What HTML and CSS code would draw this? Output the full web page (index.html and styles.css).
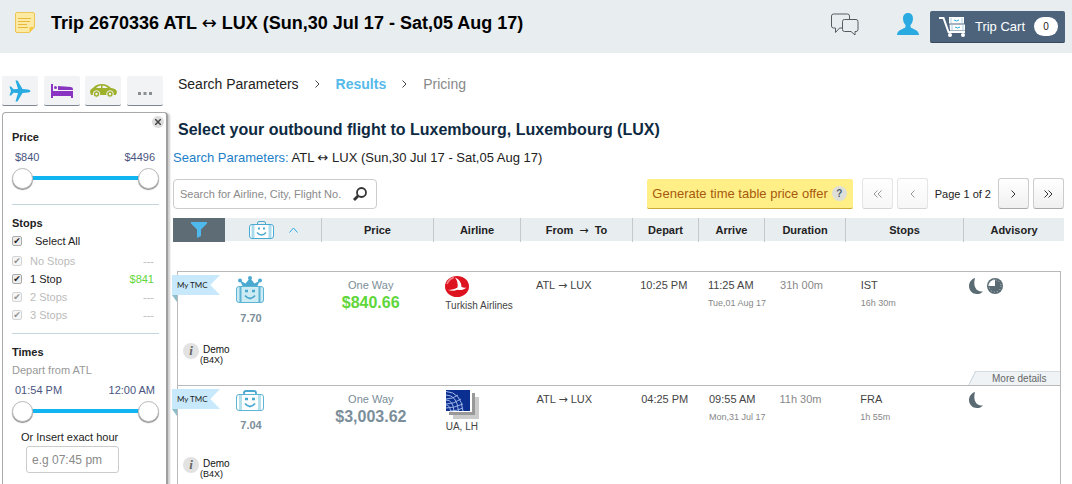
FILE: index.html
```html
<!DOCTYPE html>
<html lang="en">
<head>
    <meta charset="UTF-8">
    <meta name="viewport" content="width=device-width, initial-scale=1.0">
    <title>Trip 2670336 - Flight results</title>
    <link rel="stylesheet" href="styles.css">
</head>
<body>
    <svg class="sprite" aria-hidden="true">
        <symbol id="moon" viewBox="0 0 14 16">
            <path d="M6 0C2 1.300 0 4.500 0 8c0 4.500 3.500 8 8 8 2.400 0 4.500-.9 6-2.600C8 14.500 3.500 9 6 0z" fill="#5a6b74"/>
        </symbol>
    </svg>

    <header class="topbar">
        <svg class="note" width="20" height="21" viewBox="0 0 20 21">
            <path d="M2 .5h16q1.500 0 1.500 1.500v13l-5 5.500H2Q.5 20.500.5 19V2Q.5.500 2 .5z" fill="#fdeaa2" stroke="#edc556"/>
            <path d="M14.500 20.500V16q0-1 1-1h4z" fill="#f5c842"/>
            <path d="M3 6.500h13M3 9.500h12M3 12.500h9M3 15.500h10" stroke="#e9b93f"/>
        </svg>
        <h1>Trip 2670336 ATL <span class="arrow">↔</span> LUX (Sun,30 Jul 17 - Sat,05 Aug 17)</h1>
        <svg class="chat" width="28" height="23" viewBox="0 0 28 23" fill="none" stroke="#555c60">
            <path d="M11.500 15H8.500L4.500 19.500V15H2.500Q.5 15 .5 13V3Q.5 1 2.500 1h14Q18.500 1 18.500 3v3.500"/>
            <path d="M13.500 6.500h11.500q2 0 2 2v8q0 2-2 2h-1v3.500l-4-3.500h-6.500q-2 0-2-2v-8q0-2 2-2z"/>
        </svg>
        <svg class="user" width="22" height="22" viewBox="0 0 22 22">
            <path d="M11 0c3.500 0 5 2.500 5 5.500 0 2.500-1 5-2.500 6.500v2c1 2 8.500 2.500 8.500 8H0c0-5.500 7.500-6 8.500-8v-2C7 10.500 6 8 6 5.500 6 2.500 7.500 0 11 0z" fill="#29abe2"/>
        </svg>
        <button type="button" class="cart">
            <svg width="27" height="20" viewBox="0 0 27 20">
                <path d="M0 1h4.500l5 14H26" fill="none" stroke="#fff" stroke-width="2"/>
                <path d="M10 0h15v6.500H10zM10.500 7.500H26v6H11z" fill="#fff"/>
                <path d="M12 1v5M23 1v5M13 7.500v6M24 7.500v6" stroke="#a9cfe8"/>
                <path d="M15 3q2.500 2 5 0M16 10q2.500 2 5 0" fill="none" stroke="#29abe2"/>
                <circle cx="11" cy="18" r="2" fill="#fff"/>
                <circle cx="24" cy="18" r="2" fill="#fff"/>
            </svg>
            <span>Trip Cart</span>
            <span class="cart-count">0</span>
        </button>
    </header>

    <div class="layout">
        <aside class="sidebar">
            <nav class="tabs">
                <button type="button" aria-label="Flights">
                    <svg width="22" height="22" viewBox="0 0 22 22">
                        <path d="M6.500.5h2l5 8.500 5.500.5q2.500.5 2.500 1.500t-2.500 1.500l-5.500.5-5 8.500h-2L9 13l-4.500-.3L2 15.500H.5L2 11 .5 6.500H2l2.500 2.800L9 9z" fill="#29abe2"/>
                    </svg>
                </button>
                <button type="button" aria-label="Hotels">
                    <svg width="22" height="14" viewBox="0 0 22 14" fill="#8a35c2">
                        <path d="M0 0h2v7h20v7h-2v-2H2v2H0z"/>
                        <path d="M7 2l13 1q2 .3 2 2v1H7z"/>
                        <circle cx="4.500" cy="3.500" r="1.500"/>
                    </svg>
                </button>
                <button type="button" aria-label="Cars">
                    <svg width="27" height="14" viewBox="0 0 27 14">
                        <path d="M0 8q0-3 3-4Q6 0 12 0q5 0 9 4 5.500.5 6 4l-1 3H1z" fill="#9fb02b"/>
                        <path d="M6 4q2-2.500 5-2.500V4zM12.500 1.500q3.500 0 5.500 2.500h-5.500z" fill="#f1f3f5"/>
                        <g fill="#9fb02b" stroke="#f1f3f5">
                            <circle cx="6.500" cy="10" r="3.300"/>
                            <circle cx="20" cy="10" r="3.300"/>
                        </g>
                        <circle cx="6.500" cy="10" r="1.200" fill="#f1f3f5"/>
                        <circle cx="20" cy="10" r="1.200" fill="#f1f3f5"/>
                    </svg>
                </button>
                <button type="button" aria-label="More">
                    <svg width="14" height="8" viewBox="0 0 14 8" fill="#8a8f94">
                        <path d="M0 5h3v3H0zM5.500 5h3v3h-3zM11 5h3v3h-3z"/>
                    </svg>
                </button>
            </nav>

            <form class="filters">
                <button type="button" class="close" aria-label="Close">
                    <svg width="6" height="6" viewBox="0 0 6 6"><path d="M0 0l6 6M6 0L0 6" stroke="#444" stroke-width="1.500"/></svg>
                </button>

                <section class="price-filter">
                    <h3>Price</h3>
                    <div class="range-values"><span>$840</span><span>$4496</span></div>
                    <div class="range">
                        <input type="range" min="840" max="4496" value="840" aria-label="Minimum price">
                        <input type="range" min="840" max="4496" value="4496" aria-label="Maximum price">
                    </div>
                </section>

                <section class="stops">
                    <h3>Stops</h3>
                    <label class="all"><input type="checkbox" checked> Select All</label>
                    <label class="off"><input type="checkbox" checked disabled> No Stops <span>---</span></label>
                    <label><input type="checkbox" checked> 1 Stop <span class="best">$841</span></label>
                    <label class="off"><input type="checkbox" checked disabled> 2 Stops <span>---</span></label>
                    <label class="off"><input type="checkbox" checked disabled> 3 Stops <span>---</span></label>
                </section>

                <section>
                    <h3>Times</h3>
                    <p class="depart-from">Depart from ATL</p>
                    <div class="range-values"><span>01:54 PM</span><span>12:00 AM</span></div>
                    <div class="range">
                        <input type="range" min="834" max="1440" value="834" aria-label="Earliest departure">
                        <input type="range" min="834" max="1440" value="1440" aria-label="Latest departure">
                    </div>
                    <div class="exact">
                        <label for="exactHour">Or Insert exact hour</label>
                        <input type="text" id="exactHour" placeholder="e.g 07:45 pm">
                    </div>
                </section>
            </form>
        </aside>

        <main>
            <nav class="steps">
                <a href="#">Search Parameters</a>
                <svg width="5" height="8" viewBox="0 0 5 8"><path d="M.5.500L4 4 .5 7.500" fill="none" stroke="#444"/></svg>
                <a href="#" class="current">Results</a>
                <svg width="5" height="8" viewBox="0 0 5 8"><path d="M.5.500L4 4 .5 7.500" fill="none" stroke="#444"/></svg>
                <span>Pricing</span>
            </nav>

            <h2>Select your outbound flight to Luxembourg, Luxembourg (LUX)</h2>
            <p class="summary"><a href="#">Search Parameters:</a> ATL <span class="arrow">↔</span> LUX (Sun,30 Jul 17 - Sat,05 Aug 17)</p>

            <div class="toolbar">
                <div class="search">
                    <input type="text" aria-label="Search flights" placeholder="Search for Airline, City, Flight No.">
                    <svg width="14" height="14" viewBox="0 0 14 14" fill="none" stroke="#333">
                        <circle cx="8.500" cy="5.500" r="4.500" stroke-width="1.800"/>
                        <path d="M5 9l-4 4" stroke-width="2.800"/>
                    </svg>
                </div>
                <button type="button" class="offer">Generate time table price offer <span class="help">?</span></button>
                <div class="pager">
                    <button type="button" disabled aria-label="First page"><svg width="9" height="8" viewBox="0 0 9 8"><path d="M4.500.500L1 4l3.500 3.500M8.500.500L5 4l3.500 3.500"/></svg></button>
                    <button type="button" disabled aria-label="Previous page"><svg width="5" height="8" viewBox="0 0 5 8"><path d="M4.500.500L1 4l3.500 3.500"/></svg></button>
                    <span>Page 1 of 2</span>
                    <button type="button" aria-label="Next page"><svg width="5" height="8" viewBox="0 0 5 8"><path d="M.5.500L4 4 .5 7.500"/></svg></button>
                    <button type="button" aria-label="Last page"><svg width="9" height="8" viewBox="0 0 9 8"><path d="M.5.500L4 4 .5 7.500M4.500.500L8 4 4.500 7.500"/></svg></button>
                </div>
            </div>

            <table class="results">
                <thead>
                    <tr>
                        <th class="filter-cell">
                            <svg width="16" height="16" viewBox="0 0 16 16"><path d="M0 0h16v1.500L10 7.500V14l-4 2V7.500L0 1.500z" fill="#4fb9ee"/></svg>
                        </th>
                        <th class="score-cell">
                            <svg width="25" height="18" viewBox="0 0 25 18" fill="none" stroke="#4aa9d0">
                                <path d="M8.500 3V2q0-1.500 1.500-1.500h5q1.500 0 1.500 1.500v1"/>
                                <rect x=".5" y="3.500" width="24" height="14" rx="2.500" fill="#fff"/>
                                <path d="M4 4v13M21 4v13" stroke="#aadcee" stroke-width="3"/>
                                <path d="M8 11.500q4.500 5 9 0" stroke-width="1.500"/>
                                <path d="M9 7.500h2M14 7.500h2" stroke-width="2"/>
                            </svg>
                            <svg width="9" height="6" viewBox="0 0 9 6"><path d="M.5 5.500l4-4.500 4 4.500" fill="none" stroke="#29abe2"/></svg>
                        </th>
                        <th>Price</th>
                        <th>Airline</th>
                        <th>From &nbsp;<span class="arrow">→</span>&nbsp; To</th>
                        <th>Depart</th>
                        <th>Arrive</th>
                        <th>Duration</th>
                        <th>Stops</th>
                        <th>Advisory</th>
                    </tr>
                </thead>
                <tbody>
                    <tr>
                        <td class="source">
                            <span class="ribbon">My TMC</span>
                            <div class="provider"><i>i</i><span>Demo<small>(B4X)</small></span></div>
                        </td>
                        <td class="score">
                            <svg width="28" height="28" viewBox="0 0 28 28">
                                <path d="M7 11L4 4.500l5.500 3L14 2l4.500 5.500 5.500-3L21 11z" fill="#4aa9d0"/>
                                <g fill="#4aa9d0">
                                    <circle cx="4" cy="4.500" r="2"/>
                                    <circle cx="14" cy="2" r="2"/>
                                    <circle cx="24" cy="4.500" r="2"/>
                                </g>
                                <rect x=".5" y="10.500" width="27" height="16" rx="2.500" fill="#cdebf3" stroke="#5db4d4"/>
                                <path d="M4.500 11v15M23.500 11v15" stroke="#5db4d4" stroke-width="2"/>
                                <path d="M9 19.500q5 6 10 0" fill="none" stroke="#4aa9d0" stroke-width="1.800"/>
                                <path d="M9 15h3M16 15h3" stroke="#4aa9d0" stroke-width="2.500"/>
                            </svg>
                            <b>7.70</b>
                        </td>
                        <td class="price">One Way<strong class="best">$840.66</strong></td>
                        <td class="airline">
                            <svg width="33" height="22" viewBox="0 0 33 22">
                                <ellipse cx="12" cy="10.500" rx="12" ry="10.500" fill="#dd1420"/>
                                <path d="M2 8Q4 3 9 1.500" fill="none" stroke="#f2848a" stroke-width="1.500"/>
                                <path d="M10 1.500c4 1.500 6.500 5 6.500 9.500 2 .8 3.500.8 5 .5-3 2.500-6 3-9 2.300-3 1.200-6 1.200-9.500.2 4-.3 7-.8 9.500-2.500Q13.500 6 10 1.500z" fill="#fff"/>
                            </svg>
                            Turkish Airlines
                        </td>
                        <td class="route">ATL <span class="arrow">→</span> LUX</td>
                        <td class="depart">10:25 PM</td>
                        <td class="arrive">11:25 AM<small>Tue,01 Aug 17</small></td>
                        <td class="duration">31h 00m</td>
                        <td class="stop">IST<small>16h 30m</small></td>
                        <td class="advisory">
                            <svg width="14" height="16"><use href="#moon"/></svg>
                            <svg width="16" height="16" viewBox="0 0 16 16">
                                <circle cx="8" cy="8" r="8" fill="#5a6b74"/>
                                <path d="M8 8V1.500A6.500 6.500 0 0 0 1.500 8z" fill="#fff"/>
                                <circle cx="8" cy="8" r="6" fill="none" stroke="#c5ced2" stroke-dasharray="1 2.140"/>
                            </svg>
                            <a href="#" class="more">More details</a>
                        </td>
                    </tr>
                    <tr>
                        <td class="source">
                            <span class="ribbon">My TMC</span>
                            <div class="provider"><i>i</i><span>Demo<small>(B4X)</small></span></div>
                        </td>
                        <td class="score">
                            <svg width="28" height="21" viewBox="0 0 28 21" fill="none" stroke="#5db4d4">
                                <path d="M8 4V3q0-2 2-2h8q2 0 2 2v1" stroke="#4aa9d0" stroke-width="1.800"/>
                                <rect x=".5" y="4.500" width="27" height="16" rx="2.500" fill="#fff"/>
                                <path d="M4.500 5v15M23.500 5v15" stroke="#b5e0ec" stroke-width="3"/>
                                <path d="M9 13.500q5 6 10 0" stroke="#4aa9d0" stroke-width="1.800"/>
                                <path d="M9 9h3M16 9h3" stroke="#4aa9d0" stroke-width="2.500"/>
                            </svg>
                            <b>7.04</b>
                        </td>
                        <td class="price">One Way<strong>$3,003.62</strong></td>
                        <td class="airline">
                            <svg width="33" height="29" viewBox="0 0 33 29">
                                <path d="M7 7h26v22H7z" fill="#cbcbcb"/>
                                <path d="M3 3h26v22H3z" fill="#999"/>
                                <path d="M0 0h26v22H0z" fill="#fff"/>
                                <path d="M0 0h24v21H0z" fill="#0b2f91"/>
                                <g fill="none" stroke="#9db4e6">
                                    <path d="M0 1.500Q15 2 17 21M0 5q11 0 12.500 16M0 10q7 0 8 11M0 15q4 0 4.500 6"/>
                                    <path d="M0 18q8 0 17-4M0 14q8 0 15-5M0 9q7 0 12-4M4 21q7 0 13-3"/>
                                </g>
                            </svg>
                            UA, LH
                        </td>
                        <td class="route">ATL <span class="arrow">→</span> LUX</td>
                        <td class="depart">04:25 PM</td>
                        <td class="arrive">09:55 AM<small>Mon,31 Jul 17</small></td>
                        <td class="duration">11h 30m</td>
                        <td class="stop">FRA<small>1h 55m</small></td>
                        <td class="advisory">
                            <svg width="14" height="16"><use href="#moon"/></svg>
                            <a href="#" class="more">More details</a>
                        </td>
                    </tr>
                </tbody>
            </table>
        </main>
    </div>
</body>
</html>
```
FILE: styles.css
```css
* {
    box-sizing: border-box;
}
body {
    margin: 0;
    font-family: "Liberation Sans", Arial, sans-serif;
    font-size: 11px;
    line-height: 16px;
    color: #222;
    background: #fff;
}
h1, h2, h3, p {
    margin: 0;
}
a {
    color: inherit;
    text-decoration: none;
}
button {
    padding: 0;
    border: 0;
    font-family: inherit;
    cursor: pointer;
}
input {
    margin: 0;
    font-family: inherit;
}
svg {
    display: block;
    flex: none;
}
.sprite {
    position: absolute;
    width: 0;
    height: 0;
}
.arrow {
    font-family: "DejaVu Sans", sans-serif;
    font-weight: normal;
    line-height: 1;
}

/* top bar */
.topbar {
    display: flex;
    align-items: center;
    height: 53px;
    padding: 0 7px 8px 15px;
    background: #e8edf0;
}
.topbar h1 {
    margin-left: 16px;
    font-size: 18px;
    line-height: 24px;
    color: #000;
}
.chat {
    margin: 3px 0 0 auto;
}
.user {
    margin: 2px 11px 0 38px;
}
.cart {
    display: flex;
    align-items: center;
    gap: 9px;
    height: 32px;
    margin-top: 9px;
    padding: 0 7px 0 9px;
    border-bottom: 1px solid #38485c;
    border-radius: 2px;
    background: #4d637c;
    color: #fff;
    font-size: 13px;
}
.cart-count {
    width: 24px;
    border-radius: 10px;
    background: #fff;
    color: #222;
    font-size: 10px;
    line-height: 19px;
}

.layout {
    display: flex;
    gap: 5px;
    padding: 0 8px 0 2px;
}

/* sidebar */
.sidebar {
    flex: none;
    display: flex;
    flex-direction: column;
    width: 166px;
    padding-top: 23px;
}
.tabs {
    display: flex;
    justify-content: space-between;
    padding-right: 5px;
    margin-bottom: 6px;
}
.tabs button {
    display: flex;
    align-items: center;
    justify-content: center;
    width: 36px;
    height: 30px;
    border-bottom: 1px solid #7d868f;
    border-radius: 2px;
    background: #f1f3f5;
}
.filters {
    position: relative;
    flex: 1;
    padding: 15px 7px 0 9px;
    border: 1px solid #a9a9a9;
    border-right: 2px solid #a0a0a0;
    border-radius: 4px;
    box-shadow: 2px 1px 2px #ccc;
}
.close {
    position: absolute;
    top: 3px;
    right: 2px;
    display: flex;
    align-items: center;
    justify-content: center;
    width: 12px;
    height: 12px;
    border-radius: 50%;
    background: #ddd;
}
.filters section + section {
    margin-top: 9px;
    padding-top: 9px;
    border-top: 1px solid #c5d5dc;
}
.filters .price-filter {
    margin-bottom: 15px;
}
.filters h3 {
    font-size: 11px;
    line-height: 18px;
}
.range-values {
    display: flex;
    justify-content: space-between;
    padding: 2px 4px 0 3px;
    line-height: 18px;
    color: #4a5580;
}
.range {
    display: grid;
    align-items: center;
    height: 22px;
    margin: 1px 0 6px;
    background: linear-gradient(#10b4f0, #10b4f0) center / 126px 4px no-repeat;
}
.range input {
    grid-area: 1 / 1;
    width: 100%;
    height: 22px;
    appearance: none;
    background: none;
    pointer-events: none;
}
.range input::-webkit-slider-thumb {
    appearance: none;
    width: 21px;
    height: 21px;
    border: 1px solid #bbb;
    border-radius: 50%;
    background: #fff;
    box-shadow: 0 1px 1px #888;
    pointer-events: auto;
}
.stops label {
    display: flex;
    align-items: center;
    gap: 8px;
    padding-right: 5px;
    line-height: 18px;
}
.stops .all {
    gap: 13px;
    margin-bottom: 2px;
}
.stops .off {
    color: #bbb;
}
.stops label span {
    margin-left: auto;
}
.best {
    color: #5fd63a;
}
.stops input {
    display: flex;
    align-items: center;
    justify-content: center;
    width: 10px;
    height: 10px;
    appearance: none;
    border: 1px solid #aaa;
    border-radius: 2px;
    background: #eee;
    color: #222;
}
.stops input:checked::after {
    content: "✔";
    font-family: "DejaVu Sans", sans-serif;
    font-size: 9px;
    line-height: 8px;
}
.stops input:disabled {
    opacity: 0.5;
}
.depart-from {
    line-height: 18px;
    color: #999;
}
.exact {
    display: flex;
    flex-direction: column;
    align-items: flex-start;
    padding: 0 0 32px 9px;
}
.exact label {
    line-height: 18px;
}
.exact input {
    width: 93px;
    height: 27px;
    margin-left: 5px;
    padding: 0 5px;
    border: 1px solid #ccc;
    border-radius: 3px;
    font-size: 12px;
}
::placeholder {
    color: #8a8a8a;
}

/* main column */
main {
    flex: 1;
    min-width: 0;
    padding-top: 21px;
}
.steps {
    display: flex;
    align-items: center;
    gap: 16px;
    padding-left: 5px;
    font-size: 14px;
    line-height: 20px;
    color: #888;
}
.steps a {
    color: #222;
}
.steps .current {
    color: #55b9e9;
    font-weight: bold;
}
main h2 {
    margin-top: 25px;
    padding-left: 5px;
    font-size: 16px;
    line-height: 22px;
    color: #0e2a42;
}
.summary {
    margin-top: 8px;
    font-size: 13px;
    line-height: 18px;
}
.summary a {
    color: #1c80c9;
}
.toolbar {
    display: flex;
    align-items: flex-end;
    gap: 9px;
    margin: 11px 0 9px;
}
.search {
    display: flex;
    align-items: center;
    width: 204px;
    height: 30px;
    margin-right: auto;
    padding: 0 9px 0 6px;
    border: 1px solid #ccc;
    border-radius: 4px;
}
.search input {
    flex: 1;
    min-width: 0;
    padding: 0;
    border: 0;
    outline: 0;
    font-size: 11px;
}
.offer {
    display: flex;
    align-items: center;
    gap: 4px;
    height: 30px;
    padding: 0 6px 0 5px;
    border-bottom: 1px solid #c9ab35;
    border-radius: 2px;
    background: #ffef86;
    color: #a8590f;
    font-size: 13px;
}
.help {
    width: 15px;
    border-radius: 50%;
    background: #dedfd9;
    color: #4d5f70;
    font-size: 10px;
    font-weight: bold;
    line-height: 15px;
}
.pager {
    display: flex;
    align-items: center;
    gap: 4px;
}
.pager span {
    padding: 0 3px;
}
.pager button {
    display: flex;
    align-items: center;
    justify-content: center;
    width: 31px;
    height: 31px;
    border: 1px solid #ccc;
    border-bottom-color: #aaa;
    border-radius: 3px;
    background: linear-gradient(#fff, #f0f0f0);
}
.pager button:disabled {
    opacity: 0.5;
}
.pager path {
    fill: none;
    stroke: #333;
}

/* results: the body box is inset 4px left and 3px right of the heading bar */
.results,
.results thead,
.results tbody {
    display: block;
}
.results tr {
    --middle: 97px 112fr 87fr 112fr 66fr 66fr 81fr 118fr;
    display: grid;
}
.results thead tr {
    grid-template-columns: 52px var(--middle) 100px;
    height: 23px;
    background: #e8edf0;
}
.results th {
    padding: 0;
    border-right: 1px solid #c6c9cb;
    line-height: 24px;
}
.results th:last-child {
    border-right: 0;
}
.results .filter-cell,
.results .score-cell {
    display: flex;
    align-items: center;
    justify-content: center;
    gap: 15px;
}
.results .filter-cell {
    border-right: 0;
    background: #5e6d75;
}
.results tbody {
    margin: 30px 3px 0 4px;
    border: 1px solid #b9b9b9;
}
.results tbody tr {
    grid-template-columns: 47px var(--middle) 96px;
    height: 114px;
    border-bottom: 1px solid #b9b9b9;
}
.results tbody tr:last-child {
    border-bottom: 0;
}
.results td {
    position: relative;
    padding: 5px 0 0;
    color: #444;
    white-space: nowrap;
}
.results td small {
    display: block;
    font-size: 9px;
    line-height: 20px;
    color: #888;
}
.ribbon {
    position: absolute;
    top: 3px;
    left: -6px;
    width: 48px;
    padding-left: 5px;
    background: #c8e9fb;
    clip-path: polygon(0 0, 100% 0, 80% 50%, 100% 100%, 0 100%);
    font-family: Lato, sans-serif;
    font-size: 8px;
    line-height: 20px;
    color: #222;
}
.source::before {
    content: "";
    position: absolute;
    top: 23px;
    left: -6px;
    width: 5px;
    height: 7px;
    background: #8dbccb;
    clip-path: polygon(0 0, 100% 0, 100% 100%);
}
.provider {
    display: flex;
    align-items: flex-start;
    gap: 2px;
    margin: 66px 0 0 5px;
    font-size: 10px;
    line-height: 10px;
    color: #111;
}
.provider i {
    flex: none;
    width: 16px;
    border-radius: 50%;
    background: #e2e2e2;
    color: #666;
    font-family: "Liberation Serif", serif;
    font-size: 13px;
    font-weight: bold;
    line-height: 16px;
    text-align: center;
}
.provider span {
    padding: 2px 0 0 2px;
}
.results td.source small {
    margin-left: -3px;
    line-height: 10px;
    color: #111;
}
.results .score {
    padding: 4px 0 0 11px;
}
.score b {
    display: block;
    width: 30px;
    margin-top: 6px;
    text-align: center;
    color: #7b8e99;
}
.results .price {
    padding-right: 14px;
    text-align: center;
    color: #7b8e99;
}
.price strong {
    display: block;
    font-size: 16px;
    line-height: 20px;
}
.price .best {
    color: #5fd63a;
}
.results .airline {
    padding: 4px 0 0 12px;
    font-size: 10px;
}
.results .route {
    padding-left: 16px;
}
.results .depart {
    padding-left: 9px;
}
.results .arrive {
    padding-left: 11px;
}
.results .duration,
.results .stop {
    padding-left: 14px;
}
.results .duration {
    color: #888;
}
.results .advisory {
    display: flex;
    align-items: flex-start;
    gap: 4px;
    padding: 6px 0 0 5px;
}
.more {
    position: absolute;
    right: 0;
    bottom: 0;
    width: 92px;
    padding-left: 24px;
    background: linear-gradient(117deg, transparent 6px, #d5dce1 6px, #d5dce1 7px, #eff3f6 7px);
    border-top: 1px solid #d5dce1;
    font-size: 10px;
    line-height: 13px;
    color: #666;
    clip-path: polygon(7px 0, 100% 0, 100% 100%, 0 100%);
}
```
